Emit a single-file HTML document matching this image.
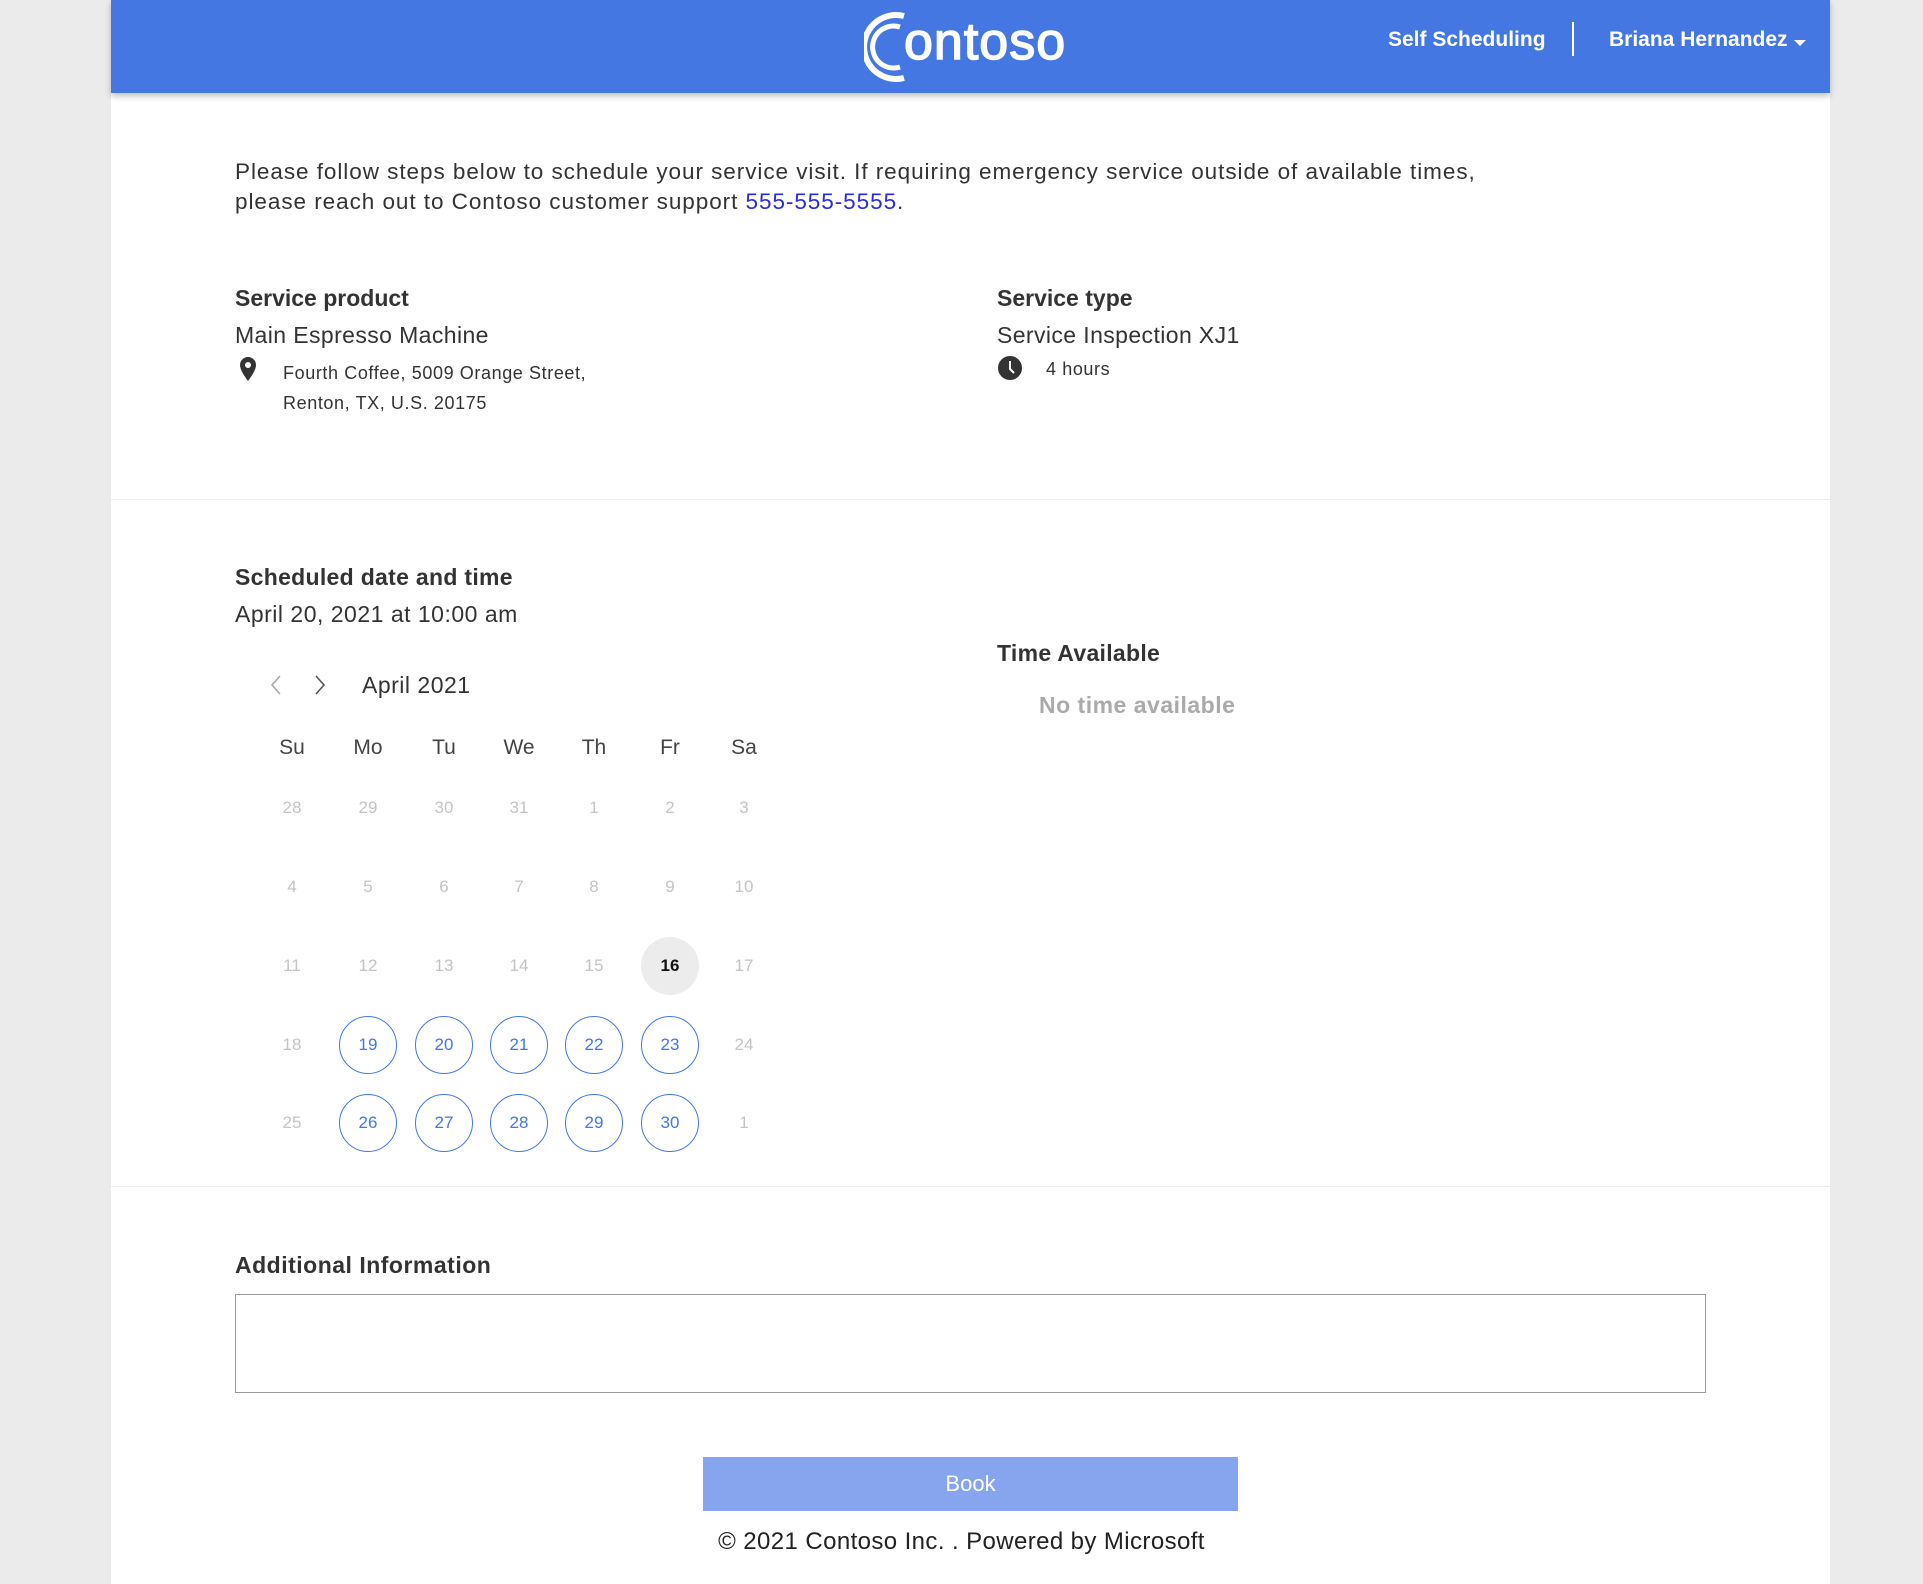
<!DOCTYPE html>
<html><head><meta charset="utf-8"><style>
*{margin:0;padding:0;box-sizing:border-box}
body{width:1923px;height:1584px;background:#ebebeb;font-family:"Liberation Sans",sans-serif;color:#333;position:relative;overflow:hidden}
.wrap{position:absolute;left:111px;top:0;width:1719px;height:1584px;background:#fff}
.hdr{position:absolute;left:111px;top:0;width:1719px;height:93px;background:#4477e2;box-shadow:0 3px 6px rgba(0,0,0,.25)}
.a{position:absolute;white-space:nowrap}
.h{font-size:23px;font-weight:bold;color:#333}
.t{font-size:23px;color:#333}
.s{font-size:18px;color:#333;letter-spacing:0.6px}
.hr{position:absolute;left:111px;width:1719px;height:1px;background:#ececec}
.d{position:absolute;width:58px;height:58px;margin:-29px 0 0 -29px;border-radius:50%;text-align:center;line-height:58px;font-size:17px;color:#c4c4c4}
.av{border:1.5px solid #4477e2;color:#4477e2;line-height:55px}
.td{background:#ececec;color:#111;font-weight:bold}
.w{position:absolute;width:60px;margin-left:-30px;text-align:center;font-size:21px;color:#444;top:736px}
</style></head><body>
<div class="wrap"></div>
<div class="hdr"></div>
<svg class="a" style="left:864px;top:8px" width="46" height="78" viewBox="0 0 46 78"><path d="M40 8 A32 32 0 1 0 40 70" fill="none" stroke="#fff" stroke-width="6"/><path d="M36 19 A21 21 0 1 0 36 59" fill="none" stroke="#fff" stroke-width="5"/></svg>
<div class="a" style="left:904px;top:12px;font-size:52px;color:#fff;font-weight:normal;-webkit-text-stroke:1.5px #fff;letter-spacing:1px">ontoso</div>
<div class="a" style="left:1388px;top:28px;font-size:21px;color:#fff;font-weight:bold">Self Scheduling</div>
<div class="a" style="left:1572px;top:22px;width:2px;height:34px;background:#fff"></div>
<div class="a" style="left:1609px;top:28px;font-size:21px;color:#fff;font-weight:bold">Briana Hernandez</div>
<div class="a" style="left:1794px;top:40px;width:0;height:0;border-left:6px solid transparent;border-right:6px solid transparent;border-top:6px solid #fff"></div>

<div class="a t" style="left:235px;top:157px;font-size:22.5px;line-height:30px;letter-spacing:0.95px">Please follow steps below to schedule your service visit. If requiring emergency service outside of available times,<br>please reach out to Contoso customer support <span style="color:#2a2ae0">555-555-5555</span>.</div>

<div class="a h" style="left:235px;top:285px">Service product</div>
<div class="a t" style="left:235px;top:322px;letter-spacing:0.4px">Main Espresso Machine</div>
<svg class="a" style="left:238px;top:356px" width="20" height="26" viewBox="0 0 20 26"><path d="M10 1a8 8 0 0 0-8 8c0 6 8 16 8 16s8-10 8-16a8 8 0 0 0-8-8z" fill="#333"/><circle cx="10" cy="9" r="3" fill="#fff"/></svg>
<div class="a s" style="left:283px;top:358px;line-height:30px">Fourth Coffee, 5009 Orange Street,<br>Renton, TX, U.S. 20175</div>

<div class="a h" style="left:997px;top:285px">Service type</div>
<div class="a t" style="left:997px;top:322px;letter-spacing:0.4px">Service Inspection XJ1</div>
<svg class="a" style="left:997px;top:355px" width="26" height="26" viewBox="0 0 26 26"><circle cx="13" cy="13" r="12" fill="#333"/><path d="M13 6v8l4 4" fill="none" stroke="#fff" stroke-width="2"/></svg>
<div class="a s" style="left:1046px;top:359px">4 hours</div>

<div class="hr" style="top:499px"></div>

<div class="a h" style="left:235px;top:564px;letter-spacing:0.3px">Scheduled date and time</div>
<div class="a t" style="left:235px;top:601px;letter-spacing:0.5px">April 20, 2021 at 10:00 am</div>

<svg class="a" style="left:268px;top:674px" width="16" height="22" viewBox="0 0 16 22"><path d="M12 2 L4 11 L12 20" fill="none" stroke="#aaa" stroke-width="1.6"/></svg>
<svg class="a" style="left:312px;top:674px" width="16" height="22" viewBox="0 0 16 22"><path d="M4 2 L12 11 L4 20" fill="none" stroke="#555" stroke-width="1.6"/></svg>
<div class="a" style="left:362px;top:672px;font-size:23px;color:#333;letter-spacing:0.5px">April 2021</div>

<div class="w" style="left:292px">Su</div><div class="w" style="left:368px">Mo</div><div class="w" style="left:444px">Tu</div><div class="w" style="left:519px">We</div><div class="w" style="left:594px">Th</div><div class="w" style="left:670px">Fr</div><div class="w" style="left:744px">Sa</div>

<div class="d" style="left:292px;top:808px">28</div><div class="d" style="left:368px;top:808px">29</div><div class="d" style="left:444px;top:808px">30</div><div class="d" style="left:519px;top:808px">31</div><div class="d" style="left:594px;top:808px">1</div><div class="d" style="left:670px;top:808px">2</div><div class="d" style="left:744px;top:808px">3</div>
<div class="d" style="left:292px;top:887px">4</div><div class="d" style="left:368px;top:887px">5</div><div class="d" style="left:444px;top:887px">6</div><div class="d" style="left:519px;top:887px">7</div><div class="d" style="left:594px;top:887px">8</div><div class="d" style="left:670px;top:887px">9</div><div class="d" style="left:744px;top:887px">10</div>
<div class="d" style="left:292px;top:966px">11</div><div class="d" style="left:368px;top:966px">12</div><div class="d" style="left:444px;top:966px">13</div><div class="d" style="left:519px;top:966px">14</div><div class="d" style="left:594px;top:966px">15</div><div class="d td" style="left:670px;top:966px">16</div><div class="d" style="left:744px;top:966px">17</div>
<div class="d" style="left:292px;top:1045px">18</div><div class="d av" style="left:368px;top:1045px">19</div><div class="d av" style="left:444px;top:1045px">20</div><div class="d av" style="left:519px;top:1045px">21</div><div class="d av" style="left:594px;top:1045px">22</div><div class="d av" style="left:670px;top:1045px">23</div><div class="d" style="left:744px;top:1045px">24</div>
<div class="d" style="left:292px;top:1123px">25</div><div class="d av" style="left:368px;top:1123px">26</div><div class="d av" style="left:444px;top:1123px">27</div><div class="d av" style="left:519px;top:1123px">28</div><div class="d av" style="left:594px;top:1123px">29</div><div class="d av" style="left:670px;top:1123px">30</div><div class="d" style="left:744px;top:1123px">1</div>

<div class="a h" style="left:997px;top:640px;letter-spacing:0.3px">Time Available</div>
<div class="a" style="left:1039px;top:692px;font-size:23px;font-weight:bold;color:#aaa;letter-spacing:0.5px">No time available</div>

<div class="hr" style="top:1186px"></div>

<div class="a h" style="left:235px;top:1252px;letter-spacing:0.5px">Additional Information</div>
<div class="a" style="left:235px;top:1294px;width:1471px;height:99px;border:1px solid #999"></div>

<div class="a" style="left:703px;top:1457px;width:535px;height:54px;background:#86a5ee;color:#fff;font-size:22px;text-align:center;line-height:54px">Book</div>
<div class="a" style="left:0;width:1923px;top:1528px;text-align:center;font-size:24px;color:#222;letter-spacing:0.4px">© 2021 Contoso Inc. . Powered by Microsoft</div>
</body></html>
